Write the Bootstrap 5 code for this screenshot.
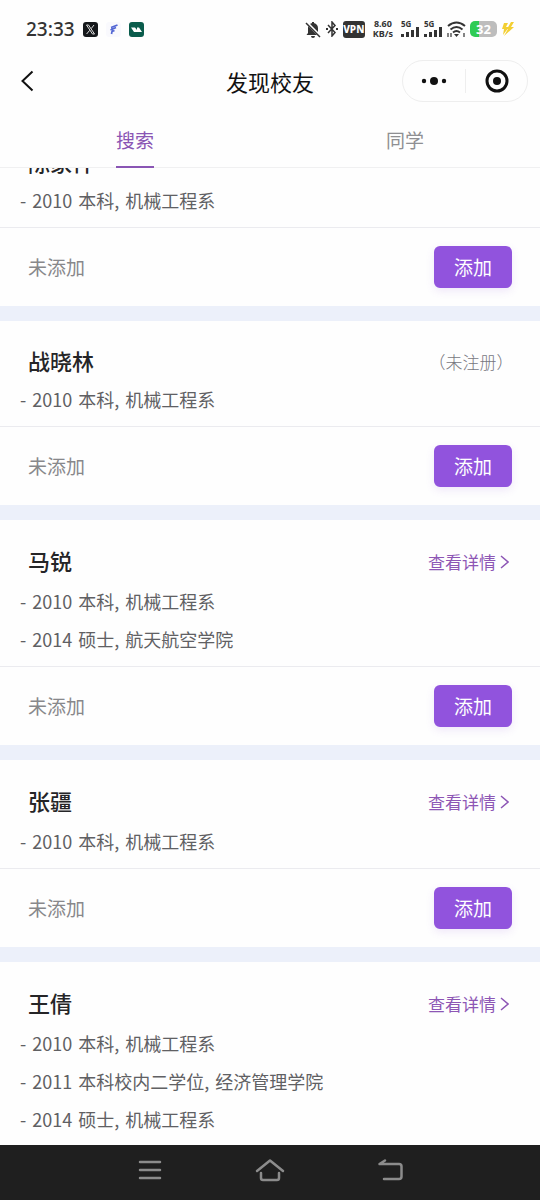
<!DOCTYPE html>
<html lang="zh-CN">
<head>
<meta charset="utf-8">
<meta name="viewport" content="width=device-width, initial-scale=1">
<title>发现校友</title>
<link href="https://cdn.jsdelivr.net/npm/bootstrap@5.3.0/dist/css/bootstrap.min.css" rel="stylesheet">
<style>
  body { font-family: "Noto Sans CJK SC", sans-serif; background: #fefefe; color: #2a2a2c; }
  svg { display: block; flex: none; }
  .status-bar { height: 56px; padding: 2px 26px 0; color: #333; }
  .clock { font: 500 19px/24px "Noto Sans", sans-serif; }
  .tiny { font: 700 9px/10px "Noto Sans", sans-serif; }
  .vpn { font: 800 10px/17px "Noto Sans", sans-serif; background: #333; color: #fff; width: 22px; border-radius: 3px; }
  .battery { width: 27px; height: 16px; border-radius: 5px; font: 700 13px/16px "Noto Sans", sans-serif; color: #fff; background: linear-gradient(90deg, #2fcb55 32%, #bdbdbd 32%); }
  .title-bar { height: 50px; display: grid; grid-template-columns: 1fr auto 1fr; padding: 0 12px; }
  .btn-back { justify-self: start; margin-left: 8px; }
  .page-title { font-size: 22px; line-height: 32px; font-weight: 400; color: #111; }
  .capsule { width: 126px; height: 42px; border: 1px solid #eee; border-radius: 21px; }
  .capsule button { height: 24px; }
  .capsule button + button { border-left: 1px solid #eee !important; }
  .tabs { height: 62px; border-bottom: 1px solid #f0f0f1; }
  .tabs .nav-link { font-size: 19px; line-height: 28px; color: #8f8f92; padding: 20px 0 0; height: 62px; border-bottom: 2px solid transparent; }
  .tabs .nav-link.active { color: #8a55b4; border-bottom-color: #8a55b4; }
  .feed { overflow-y: auto; scrollbar-width: none; background: #ecf0fa; }
  .feed::-webkit-scrollbar { display: none; }
  .person { background: #fefefe; padding-top: 22px; }
  .person + .person { margin-top: 15px; }
  .person-head { height: 37px; padding: 0 28px; }
  .person-head.has-link { height: 40px; padding-right: 31px; }
  .person h2 { font-size: 22px; line-height: 32px; font-weight: 500; color: #252527; padding-bottom: 4px; }
  .detail { font-size: 17px; line-height: 24px; color: #8d56b5; }
  .unregistered { font-size: 17px; line-height: 24px; font-weight: 300; color: #77777f; font-feature-settings: "halt"; margin-right: 7px; }
  .degrees { padding: 0 20px 8px; }
  .degrees li { font-size: 18px; line-height: 38px; color: #606063; gap: 6px; }
  .person-foot { border-top: 1px solid #ebebef; padding: 18px 28px; height: 79px; }
  .state { font-size: 19px; line-height: 28px; color: #88888b; }
  .btn-add { width: 78px; height: 42px; padding: 0; border: 0; border-radius: 6px; font-size: 19px; line-height: 28px; color: #fff; background: #9153dd; box-shadow: 0 3px 8px #9153dd22; }
  .btn-add:hover { color: #fff; background: #8247cf; }
  .system-nav { height: 55px; background: #1f1f1f; padding: 0 90px 6px; }
</style>
</head>
<body class="vh-100 d-flex flex-column overflow-hidden">
<div class="status-bar d-flex align-items-center justify-content-between flex-shrink-0">
  <div class="d-flex align-items-center gap-1">
    <span class="clock me-1">23:33</span>
    <svg width="15" height="15" viewBox="0 0 15 15"><rect width="15" height="15" rx="3" fill="#15181b"/><path d="M3.5 3h2l6 9h-2zM11 3 8.2 6.6M6.7 8.3 3.6 12" fill="none" stroke="#ddd"/></svg>
    <svg class="ms-1" width="15" height="15" viewBox="0 0 15 15"><rect width="15" height="15" rx="3" fill="#f9f9fd"/><path d="M11.5 3 5 5.500M10 5.500 4.500 8M8.500 8.500 6 9.500 5.500 12M6 4.500v4" fill="none" stroke="#5266d4" stroke-width="1.700"/></svg>
    <svg class="ms-1" width="15" height="15" viewBox="0 0 15 15"><rect width="15" height="15" rx="3" fill="#0a5c4c"/><path d="M2 5.500h4l2 2.500V5.500h2l3 4.500H5z" fill="#fff"/></svg>
  </div>
  <div class="d-flex align-items-center gap-1">
    <svg width="16" height="17" viewBox="0 0 16 17"><path d="M3 12V7a5 5 0 0 1 10 0v5l1.500 2h-13zM6 15h4a2 2 0 0 1-4 0zM7 1h2v2H7z" fill="#333"/><path d="m1 1 14 14" stroke="#fefefe" stroke-width="3"/><path d="m1 2 14 14" stroke="#333" stroke-width="1.500"/></svg>
    <svg width="14" height="16" viewBox="0 0 14 16" fill="none" stroke="#333" stroke-width="1.500"><path d="m3 4 7 7.500L7 15V1l3 3.500L3 12"/><path d="M1 8h2M11 8h2" stroke-width="2"/></svg>
    <span class="vpn text-center">VPN</span>
    <span class="tiny ms-1 d-flex flex-column align-items-center"><span>8.60</span><span>KB/s</span></span>
    <svg class="ms-1" width="19" height="17" viewBox="0 0 19 17"><use href="#bars"/></svg>
    <svg width="19" height="17" viewBox="0 0 19 17"><use href="#bars"/></svg>
    <svg width="19" height="17" viewBox="0 0 19 17" fill="none" stroke="#333" stroke-width="2"><path d="M1 5q8.500-7 17 0M3.500 8.500q6-5 12 0M6 11.500q3.500-3 7 0"/><path d="m7 13 2.500 3 2.500-3z" fill="#333" stroke="none"/><path d="M1 12v4M4 12v4M17 12v4" stroke-width="1.200"/></svg>
    <span class="battery text-center">32</span>
    <svg width="13" height="14" viewBox="0 0 13 14"><path d="M3 1h4L5 5h3l-6 8 1-6H1zM10 0h3l-3 5h3L3 14l4-7H6z" fill="#f3cf32"/></svg>
  </div>
</div>
<svg class="position-absolute" width="0" height="0"><defs><g id="bars" fill="#333"><path d="M0 13h3v3H0zM5 11h3v5H5zM10 9h3v7h-3zM15 6h3v10h-3z"/><text x="0" y="6" font-family="Noto Sans, sans-serif" font-weight="700" font-size="8">5G</text></g></defs></svg>
<header class="title-bar align-items-center flex-shrink-0">
  <button class="btn btn-back p-0 border-0" aria-label="返回"><svg width="14" height="22" viewBox="0 0 14 22"><path d="M12.500 1.500 2.500 11l10 9.500" fill="none" stroke="#111" stroke-width="2"/></svg></button>
  <h1 class="page-title m-0">发现校友</h1>
  <div class="capsule d-flex align-items-center ms-auto">
    <button class="btn p-0 border-0 rounded-0 w-50 d-flex justify-content-center align-items-center" aria-label="更多"><svg width="26" height="10" viewBox="0 0 26 10" fill="#111"><circle cx="3" cy="5" r="2.200"/><circle cx="13" cy="5" r="4"/><circle cx="23" cy="5" r="2.200"/></svg></button>
    <button class="btn p-0 border-0 rounded-0 w-50 d-flex justify-content-center align-items-center" aria-label="关闭"><svg width="24" height="24" viewBox="0 0 24 24"><circle cx="12" cy="12" r="10" fill="none" stroke="#111" stroke-width="3"/><circle cx="12" cy="12" r="4" fill="#111"/></svg></button>
  </div>
</header>
<nav class="tabs nav nav-fill flex-shrink-0">
  <div class="col d-flex justify-content-center"><a class="nav-link active" href="#search">搜索</a></div>
  <div class="col d-flex justify-content-center"><a class="nav-link" href="#classmates">同学</a></div>
</nav>
<main class="feed flex-grow-1" id="search">
  <article class="person">
    <div class="person-head d-flex align-items-center"><h2 class="m-0">陈家祥</h2></div>
    <ul class="degrees list-unstyled m-0"><li class="d-flex"><span>-</span><span>2010</span><span>本科,</span><span>机械工程系</span></li></ul>
    <div class="person-foot d-flex justify-content-between"><span class="state align-self-center">未添加</span><button class="btn btn-add">添加</button></div>
  </article>
  <article class="person">
    <div class="person-head d-flex align-items-center justify-content-between"><h2 class="m-0">战晓林</h2><span class="unregistered">（未注册）</span></div>
    <ul class="degrees list-unstyled m-0"><li class="d-flex"><span>-</span><span>2010</span><span>本科,</span><span>机械工程系</span></li></ul>
    <div class="person-foot d-flex justify-content-between"><span class="state align-self-center">未添加</span><button class="btn btn-add">添加</button></div>
  </article>
  <article class="person">
    <div class="person-head has-link d-flex align-items-center justify-content-between"><h2 class="m-0">马锐</h2><a class="detail d-flex align-items-center gap-1 text-decoration-none" href="#p3">查看详情<svg width="9" height="14" viewBox="0 0 9 14"><path d="m1 1 7 6-7 6" fill="none" stroke="currentColor" stroke-width="1.500"/></svg></a></div>
    <ul class="degrees list-unstyled m-0"><li class="d-flex"><span>-</span><span>2010</span><span>本科,</span><span>机械工程系</span></li><li class="d-flex"><span>-</span><span>2014</span><span>硕士,</span><span>航天航空学院</span></li></ul>
    <div class="person-foot d-flex justify-content-between"><span class="state align-self-center">未添加</span><button class="btn btn-add">添加</button></div>
  </article>
  <article class="person">
    <div class="person-head has-link d-flex align-items-center justify-content-between"><h2 class="m-0">张疆</h2><a class="detail d-flex align-items-center gap-1 text-decoration-none" href="#p4">查看详情<svg width="9" height="14" viewBox="0 0 9 14"><path d="m1 1 7 6-7 6" fill="none" stroke="currentColor" stroke-width="1.500"/></svg></a></div>
    <ul class="degrees list-unstyled m-0"><li class="d-flex"><span>-</span><span>2010</span><span>本科,</span><span>机械工程系</span></li></ul>
    <div class="person-foot d-flex justify-content-between"><span class="state align-self-center">未添加</span><button class="btn btn-add">添加</button></div>
  </article>
  <article class="person">
    <div class="person-head has-link d-flex align-items-center justify-content-between"><h2 class="m-0">王倩</h2><a class="detail d-flex align-items-center gap-1 text-decoration-none" href="#p5">查看详情<svg width="9" height="14" viewBox="0 0 9 14"><path d="m1 1 7 6-7 6" fill="none" stroke="currentColor" stroke-width="1.500"/></svg></a></div>
    <ul class="degrees list-unstyled m-0"><li class="d-flex"><span>-</span><span>2010</span><span>本科,</span><span>机械工程系</span></li><li class="d-flex"><span>-</span><span>2011</span><span>本科校内二学位,</span><span>经济管理学院</span></li><li class="d-flex"><span>-</span><span>2014</span><span>硕士,</span><span>机械工程系</span></li></ul>
  </article>
</main>
<footer class="system-nav d-flex align-items-center flex-shrink-0">
  <button class="btn col p-0 border-0 d-flex justify-content-center" aria-label="最近任务"><svg width="24" height="20" viewBox="0 0 24 20"><path d="M2 2h20M2 10h20M2 18h20" stroke="#8c8c8c" stroke-width="2.500" stroke-linecap="round"/></svg></button>
  <button class="btn col p-0 border-0 d-flex justify-content-center" aria-label="主屏幕"><svg width="30" height="24" viewBox="0 0 30 24" fill="none" stroke="#8c8c8c" stroke-width="2.500" stroke-linecap="round" stroke-linejoin="round"><path d="M2 13 15 2.500 28 13M6 15v5q0 2 2 2h14q2 0 2-2v-5"/></svg></button>
  <button class="btn col p-0 border-0 d-flex justify-content-center" aria-label="返回上一级"><svg width="26" height="24" viewBox="0 0 26 24" fill="none" stroke="#8c8c8c" stroke-width="2.500" stroke-linecap="round" stroke-linejoin="round"><path d="M8 2.500 2.500 6H22q2.500 0 2.500 2.500v10q0 2.500-2.500 2.500H7"/></svg></button>
</footer>
<script src="https://cdn.jsdelivr.net/npm/bootstrap@5.3.0/dist/js/bootstrap.bundle.min.js"></script>
<script>
  // Reopen the list where the first name is just leaving the top edge.
  document.querySelector('.feed').scrollTop = 46;
</script>
</body>
</html>
